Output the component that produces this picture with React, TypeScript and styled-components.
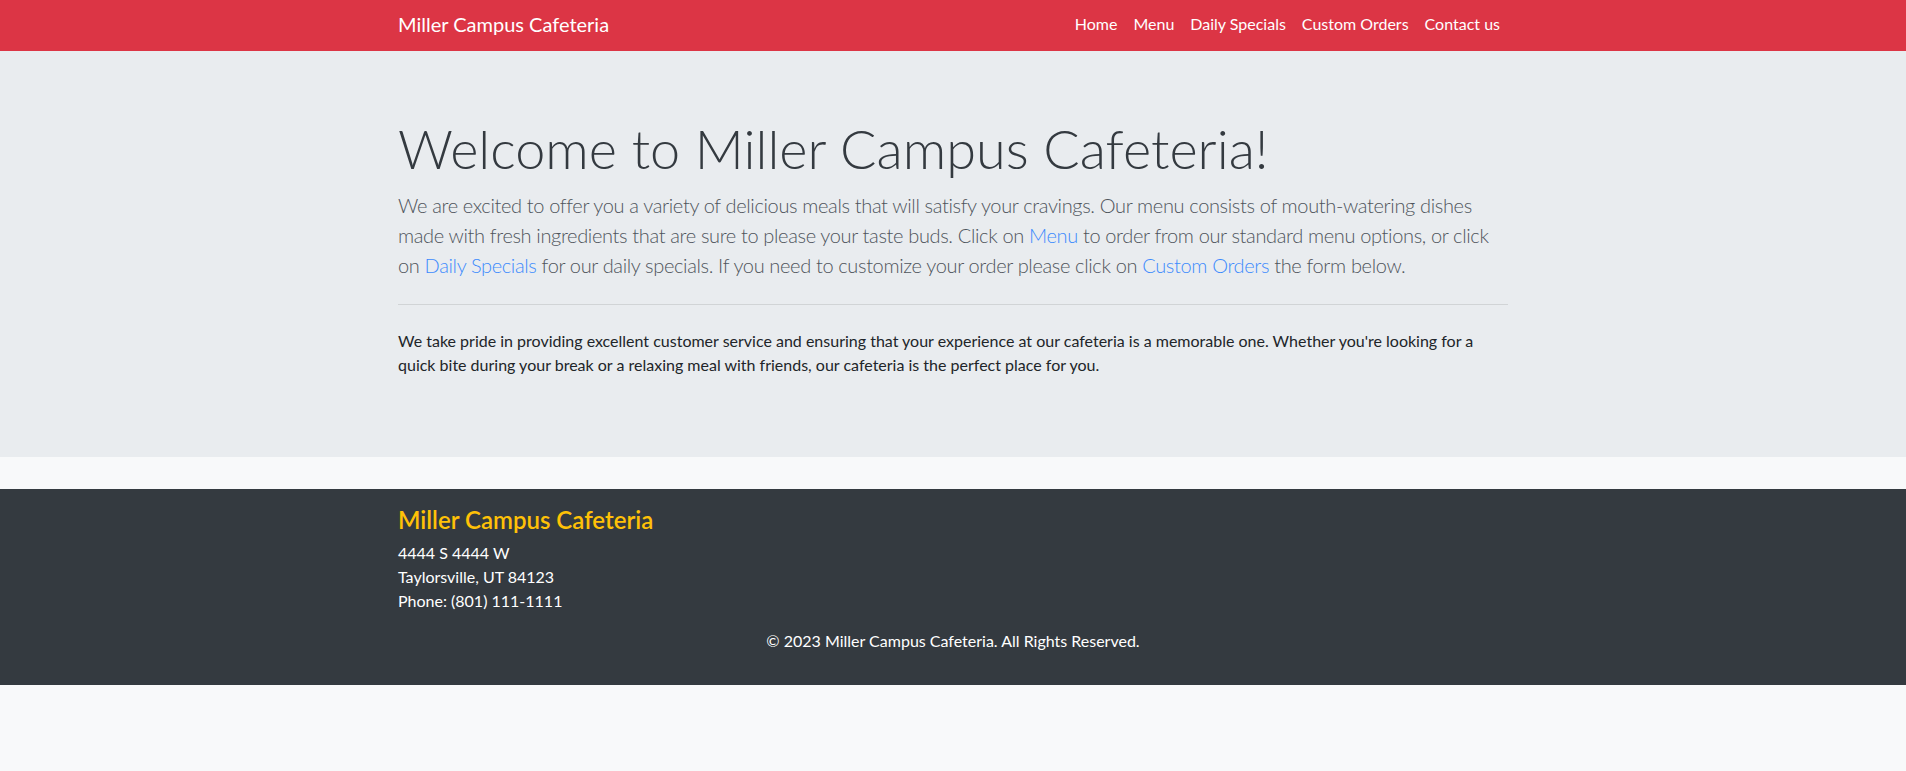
import styled, { createGlobalStyle } from "styled-components";

const GlobalStyle = createGlobalStyle`
  *, *::before, *::after {
    box-sizing: border-box;
  }
  body {
    margin: 0;
    background: #f8f9fa;
    color: #212529;
    font-family: Lato, "Open Sans", "Liberation Sans", sans-serif;
    font-size: 16px;
    line-height: 1.5;
  }
`;

const navLinks = ["Home", "Menu", "Daily Specials", "Custom Orders", "Contact us"];

export default function App() {
  return (
    <>
      <GlobalStyle />
      <Navbar>
        <Container className="nav-inner">
          <Brand href="#">Miller Campus Cafeteria</Brand>
          <NavList>
            {navLinks.map((label) => (
              <li key={label}>
                <NavLink href="#">{label}</NavLink>
              </li>
            ))}
          </NavList>
        </Container>
      </Navbar>

      <Jumbotron>
        <Container>
          <Display>Welcome to Miller Campus Cafeteria!</Display>
          <Lead>
            We are excited to offer you a variety of delicious meals that will
            satisfy your cravings. Our menu consists of mouth-watering dishes
            made with fresh ingredients that are sure to please your taste buds.
            Click on <TextLink href="#">Menu</TextLink> to order from our
            standard menu options, or click on{" "}
            <TextLink href="#">Daily Specials</TextLink> for our daily specials.
            If you need to customize your order please click on{" "}
            <TextLink href="#">Custom Orders</TextLink> the form below.
          </Lead>
          <Divider />
          <Body>
            We take pride in providing excellent customer service and ensuring
            that your experience at our cafeteria is a memorable one. Whether
            you're looking for a quick bite during your break or a relaxing meal
            with friends, our cafeteria is the perfect place for you.
          </Body>
        </Container>
      </Jumbotron>

      <Footer>
        <Container>
          <FooterTitle>Miller Campus Cafeteria</FooterTitle>
          <Address>
            4444 S 4444 W
            <br />
            Taylorsville, UT 84123
            <br />
            Phone: (801) 111-1111
          </Address>
          <Copyright>© 2023 Miller Campus Cafeteria. All Rights Reserved.</Copyright>
        </Container>
      </Footer>
    </>
  );
}

const Container = styled.div`
  width: 100%;
  max-width: 1140px;
  margin: 0 auto;
  padding: 0 15px;

  &.nav-inner {
    display: flex;
    align-items: center;
    justify-content: space-between;
  }
`;

const Navbar = styled.nav`
  background: #dc3545;
  padding: 6px 0 10px;
`;

const Brand = styled.a`
  color: #fff;
  font-size: 20px;
  line-height: 30px;
  padding: 2.5px 0;
  text-decoration: none;
`;

const NavList = styled.ul`
  display: flex;
  list-style: none;
  margin: 0;
  padding: 0;
`;

const NavLink = styled.a`
  display: block;
  padding: 5.5px 8px;
  color: #fff;
  text-decoration: none;
  font-size: 16px;
`;

const Jumbotron = styled.section`
  background: #e9ecef;
  padding: 64px 0;
  margin-bottom: 32px;
`;

const Display = styled.h1`
  margin: 0 0 8px;
  font-size: 54px;
  font-weight: 300;
  line-height: 67px;
  color: #343a40;
`;

const Lead = styled.p`
  margin: 0;
  font-size: 20px;
  font-weight: 300;
  line-height: 30px;
  letter-spacing: -0.35px;
  color: #4f555c;
`;

const TextLink = styled.a`
  color: #3d8bfd;
  text-decoration: none;
`;

const Divider = styled.hr`
  margin: 24px 0;
  border: 0;
  border-top: 1px solid rgba(0, 0, 0, 0.1);
`;

const Body = styled.p`
  margin: 0 0 16px;
  font-size: 16px;
  color: #212529;
`;

const Footer = styled.footer`
  background: #343a40;
  color: #fff;
  padding: 17px 0 16px;
`;

const FooterTitle = styled.h4`
  margin: 0 0 6px;
  font-size: 24px;
  font-weight: 600;
  line-height: 1.2;
  color: #ffc107;
`;

const Address = styled.p`
  margin: 0 0 16px;
  font-size: 16px;
`;

const Copyright = styled.p`
  margin: 0 0 16px;
  text-align: center;
  font-size: 16px;
`;
